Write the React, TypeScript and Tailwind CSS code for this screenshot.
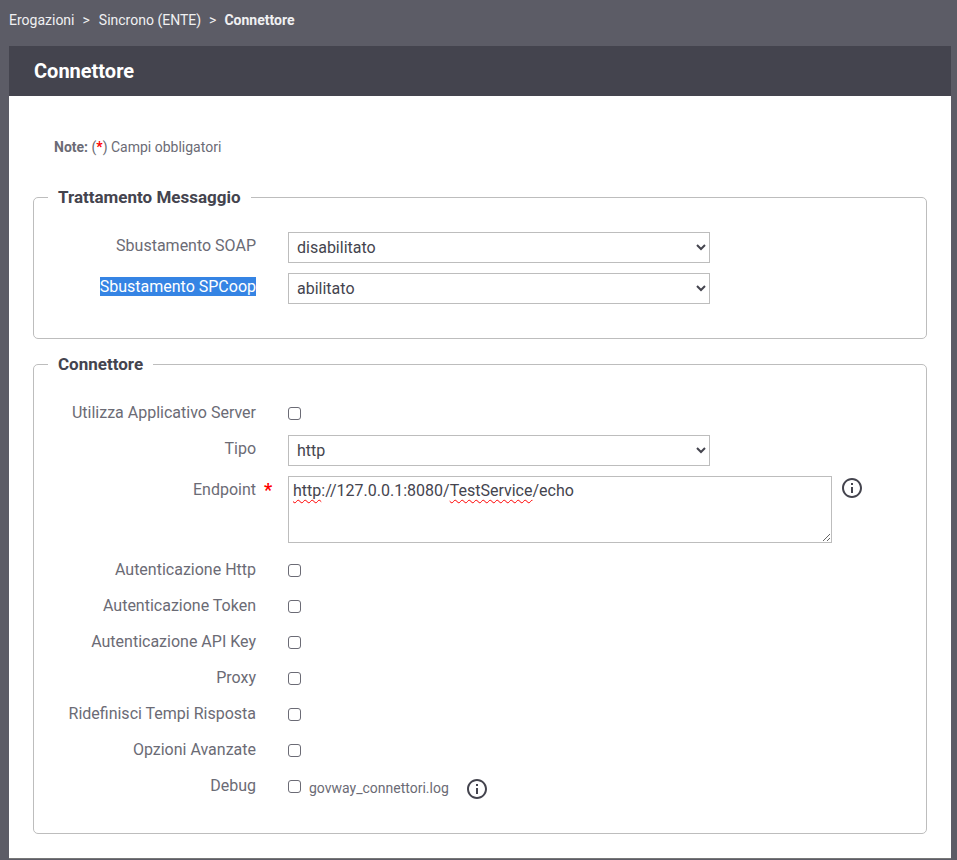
import type { ReactNode } from 'react';

const font = "font-['Roboto',sans-serif]";

function InfoIcon() {
  return (
    <svg viewBox="0 0 24 24" className="w-6 h-6 fill-[#44444e] shrink-0">
      <path d="M11 7h2v2h-2zm0 4h2v6h-2zm1-9C6.48 2 2 6.48 2 12s4.48 10 10 10 10-4.48 10-10S17.52 2 12 2zm0 18c-4.41 0-8-3.59-8-8s3.59-8 8-8 8 3.59 8 8-3.59 8-8 8z" />
    </svg>
  );
}

function Section({ title, className, children }: { title: string; className: string; children: ReactNode }) {
  return (
    <fieldset className={`border border-[#bdbdbd] rounded-[5px] pl-[14px] min-w-0 ${className}`}>
      <legend className="px-[10px] text-[17px] leading-[19px] font-bold text-[#44444e]">{title}</legend>
      {children}
    </fieldset>
  );
}

function Row({ label, className, labelClass = '', children }: { label: ReactNode; className: string; labelClass?: string; children: ReactNode }) {
  return (
    <div className={`flex items-start ${className}`}>
      <div className={`w-[208px] text-right text-[16px] leading-[19px] text-[#6b6b75] shrink-0 mr-[32px] ${labelClass}`}>{label}</div>
      {children}
    </div>
  );
}

function Select({ value }: { value: string }) {
  return (
    <select
      defaultValue={value}
      className="w-[422px] h-[31px] border border-[#bdbdbd] bg-white pl-[4px] text-[16px] text-[#44444e]"
    >
      <option>{value}</option>
    </select>
  );
}

function CheckRow({ label, className = 'h-[36px]', children }: { label: string; className?: string; children?: ReactNode }) {
  return (
    <Row label={label} className={className}>
      <input type="checkbox" className="w-[13px] h-[13px] mt-[4px] appearance-none border border-[#6b6b75] rounded-[3px] bg-white" />
      {children}
    </Row>
  );
}

export default function App() {
  return (
    <div className={`${font} h-[860px] overflow-hidden bg-[#5c5c66] flex flex-col`}>
      {/* Breadcrumb */}
      <div className="h-[46px] shrink-0 pb-[6px] pl-[9px] flex items-center gap-[8px] text-[14px] text-[#f0f0f2]">
        <span>Erogazioni</span>
        <span className="mr-[1px]">&gt;</span>
        <span>Sincrono (ENTE)</span>
        <span>&gt;</span>
        <span className="font-bold">Connettore</span>
      </div>

      <div className="mx-[6px] ml-[9px] flex-1 flex flex-col">
        <div className="h-[50px] shrink-0 bg-[#44444e] pl-[25px] flex items-center text-[20px] font-bold text-white">
          Connettore
        </div>

        <div className="h-[763px] shrink-0 bg-white border-b border-[#777] pl-[24px] pr-[24px]">
          <p className="pt-[43px] pl-[21px] text-[14px] leading-[17px] text-[#6b6b75]">
            <b>Note:</b> (<b className="text-[#f00]">*</b>) Campi obbligatori
          </p>

          <Section title="Trattamento Messaggio" className="mt-[32px] h-[151px]">
            <Row label="Sbustamento SOAP" labelClass="pt-[4px]" className="mt-[25px] h-[41px]">
              <Select value="disabilitato" />
            </Row>
            <Row
              label={<span className="bg-[#3584e4] text-white">Sbustamento SPCoop</span>}
              labelClass="pt-[4px]"
              className="h-[41px]"
            >
              <Select value="abilitato" />
            </Row>
          </Section>

          <Section title="Connettore" className="mt-[16px] h-[479px]">
            <CheckRow label="Utilizza Applicativo Server" className="mt-[29px] h-[32px]" />
            <Row label="Tipo" labelClass="pt-[4px]" className="h-[41px]">
              <Select value="http" />
            </Row>
            <Row
              label={
                <span className="relative">
                  Endpoint
                  <span className="absolute left-full ml-[8px] top-0 text-[18px] text-[#f00] font-bold">*</span>
                </span>
              }
              labelClass="pt-[4px]"
              className="h-[84px] -mr-[3px]"
            >
              <div className="w-[544px] h-[67px] border border-[#bdbdbd] bg-white px-[4px] pt-[4px] text-[16px] leading-[19px] text-[#44444e] resize overflow-auto">
                <span className="underline decoration-wavy decoration-[#f00] decoration-1 underline-offset-[3px]">http</span>
                ://127.0.0.1:8080/
                <span className="underline decoration-wavy decoration-[#f00] decoration-1 underline-offset-[3px]">TestService</span>
                /echo
              </div>
              <div className="ml-[8px]">
                <InfoIcon />
              </div>
            </Row>
            <CheckRow label="Autenticazione Http" />
            <CheckRow label="Autenticazione Token" />
            <CheckRow label="Autenticazione API Key" />
            <CheckRow label="Proxy" />
            <CheckRow label="Ridefinisci Tempi Risposta" />
            <CheckRow label="Opzioni Avanzate" />
            <CheckRow label="Debug">
              <span className="ml-[8px] text-[14px] leading-[19px] text-[#6b6b75] mt-[3px]">govway_connettori.log</span>
              <div className="ml-[16px] mt-[1px]">
                <InfoIcon />
              </div>
            </CheckRow>
          </Section>
        </div>
      </div>
    </div>
  );
}
